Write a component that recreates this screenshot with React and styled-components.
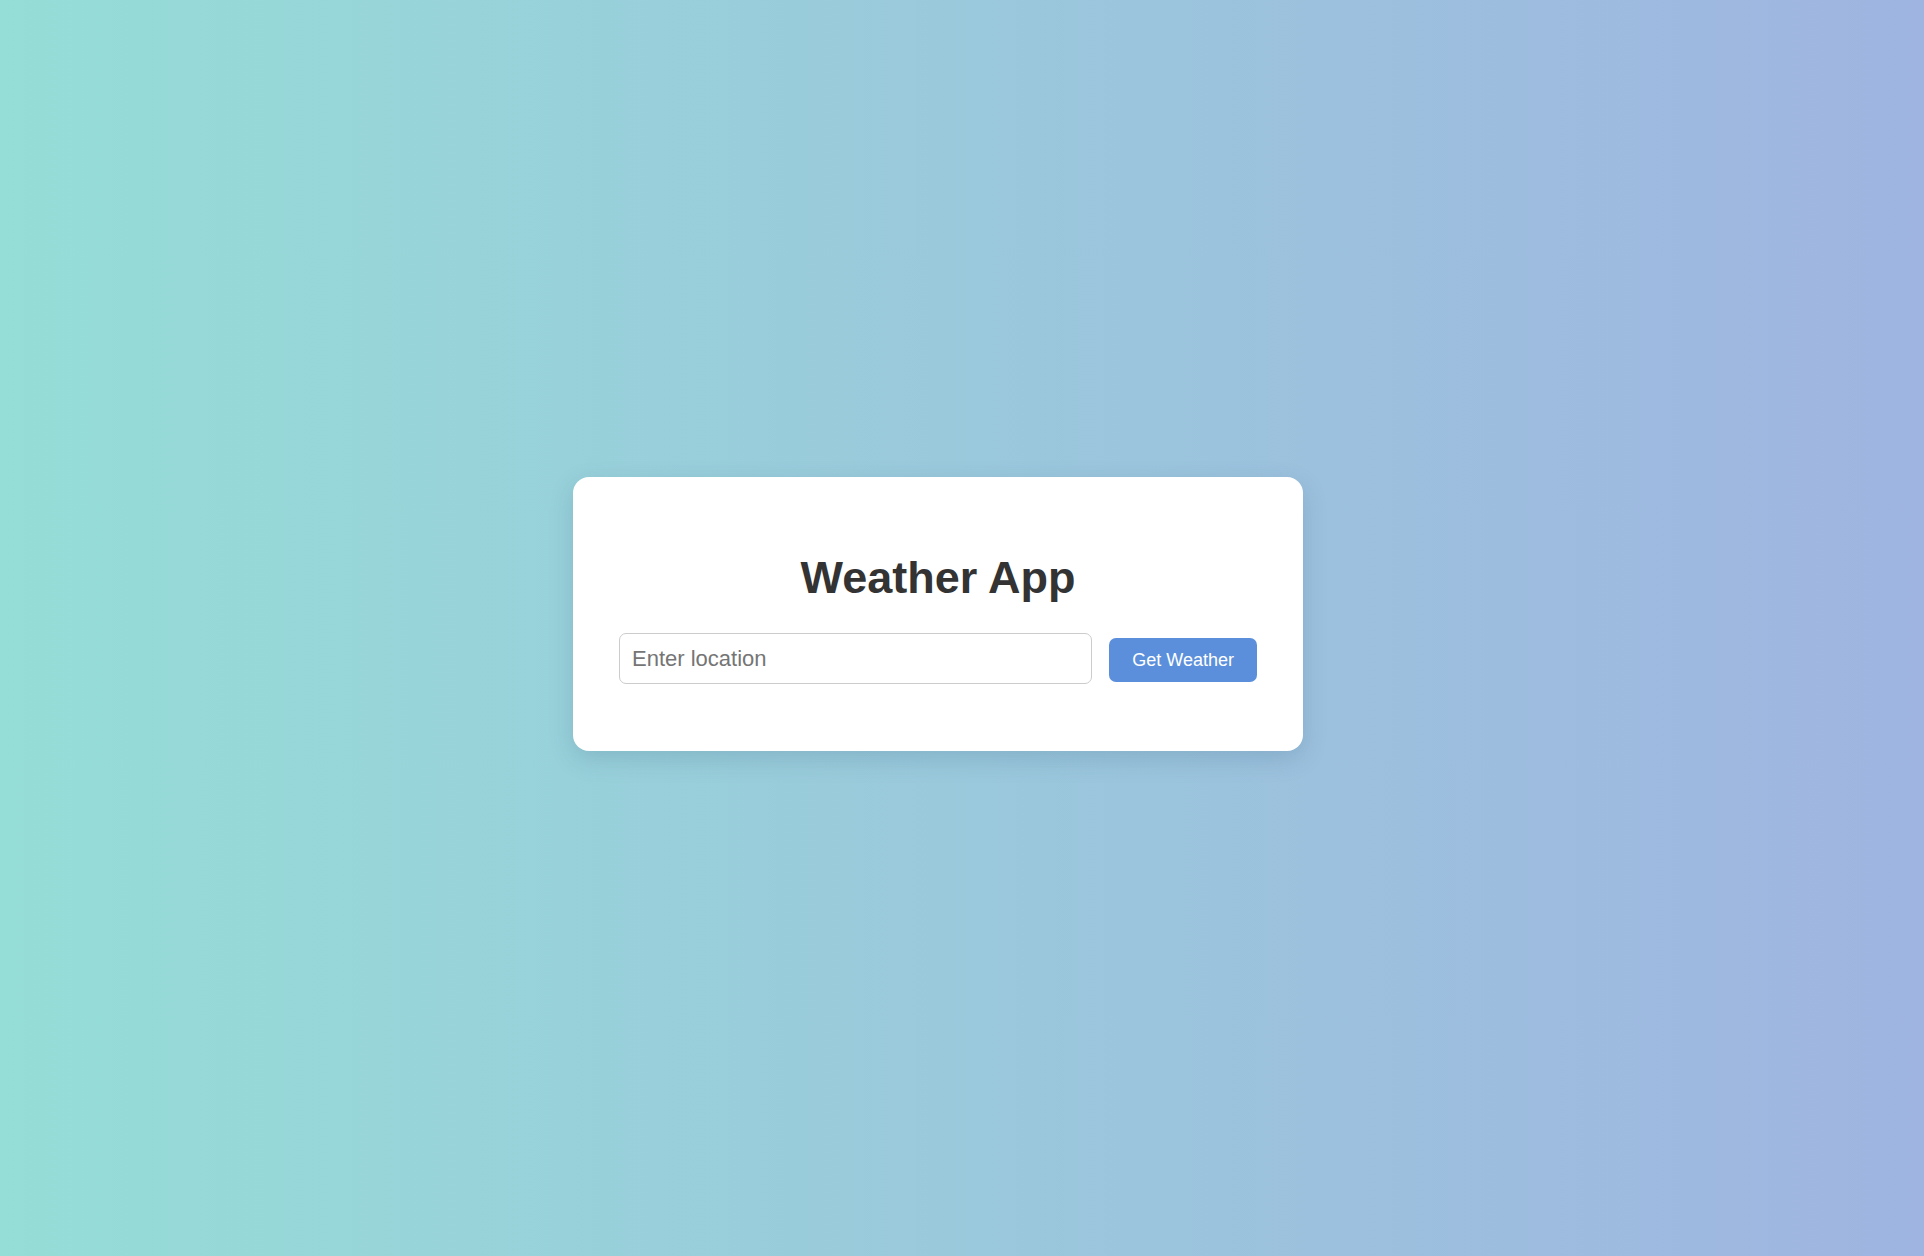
import styled, { createGlobalStyle } from "styled-components";

const GlobalStyle = createGlobalStyle`
  html, body {
    margin: 0;
    padding: 0;
  }

  body {
    font-family: "Liberation Sans", Arial, sans-serif;
    background: linear-gradient(to right, #95ddd7 0%, #9fb4e1 100%);
    min-height: 100vh;
  }
`;

const Page = styled.main`
  min-height: 100vh;
  box-sizing: border-box;
  display: flex;
  align-items: center;
  justify-content: center;
  padding: 0 48px 28px 0;
`;

const Card = styled.section`
  width: 730px;
  box-sizing: border-box;
  background: #fff;
  border-radius: 16px;
  padding: 75px 46px 67px;
  box-shadow: 0 8px 24px rgba(40, 80, 110, 0.18);
  text-align: center;
`;

const Title = styled.h1`
  margin: 0 0 30px;
  font-size: 45px;
  font-weight: 700;
  color: #333;
  line-height: 1.15;
`;

const SearchRow = styled.form`
  display: flex;
  align-items: center;
  gap: 17px;
`;

const LocationInput = styled.input`
  flex: 1;
  min-width: 0;
  box-sizing: border-box;
  height: 51px;
  padding: 0 12px;
  font-family: inherit;
  font-size: 22px;
  color: #333;
  border: 1px solid #ccc;
  border-radius: 7px;
  outline: none;

  &::placeholder {
    color: #757575;
  }
`;

const Button = styled.button`
  height: 44px;
  margin-top: 3px;
  padding: 0 23px;
  font-family: inherit;
  font-size: 18px;
  color: #fff;
  background: #5b8fdb;
  border: none;
  border-radius: 7px;
  cursor: pointer;
`;

export default function App() {
  return (
    <>
      <GlobalStyle />
      <Page>
        <Card>
          <Title>Weather App</Title>
          <SearchRow onSubmit={(e) => e.preventDefault()}>
            <LocationInput type="text" placeholder="Enter location" />
            <Button type="submit">Get Weather</Button>
          </SearchRow>
        </Card>
      </Page>
    </>
  );
}
